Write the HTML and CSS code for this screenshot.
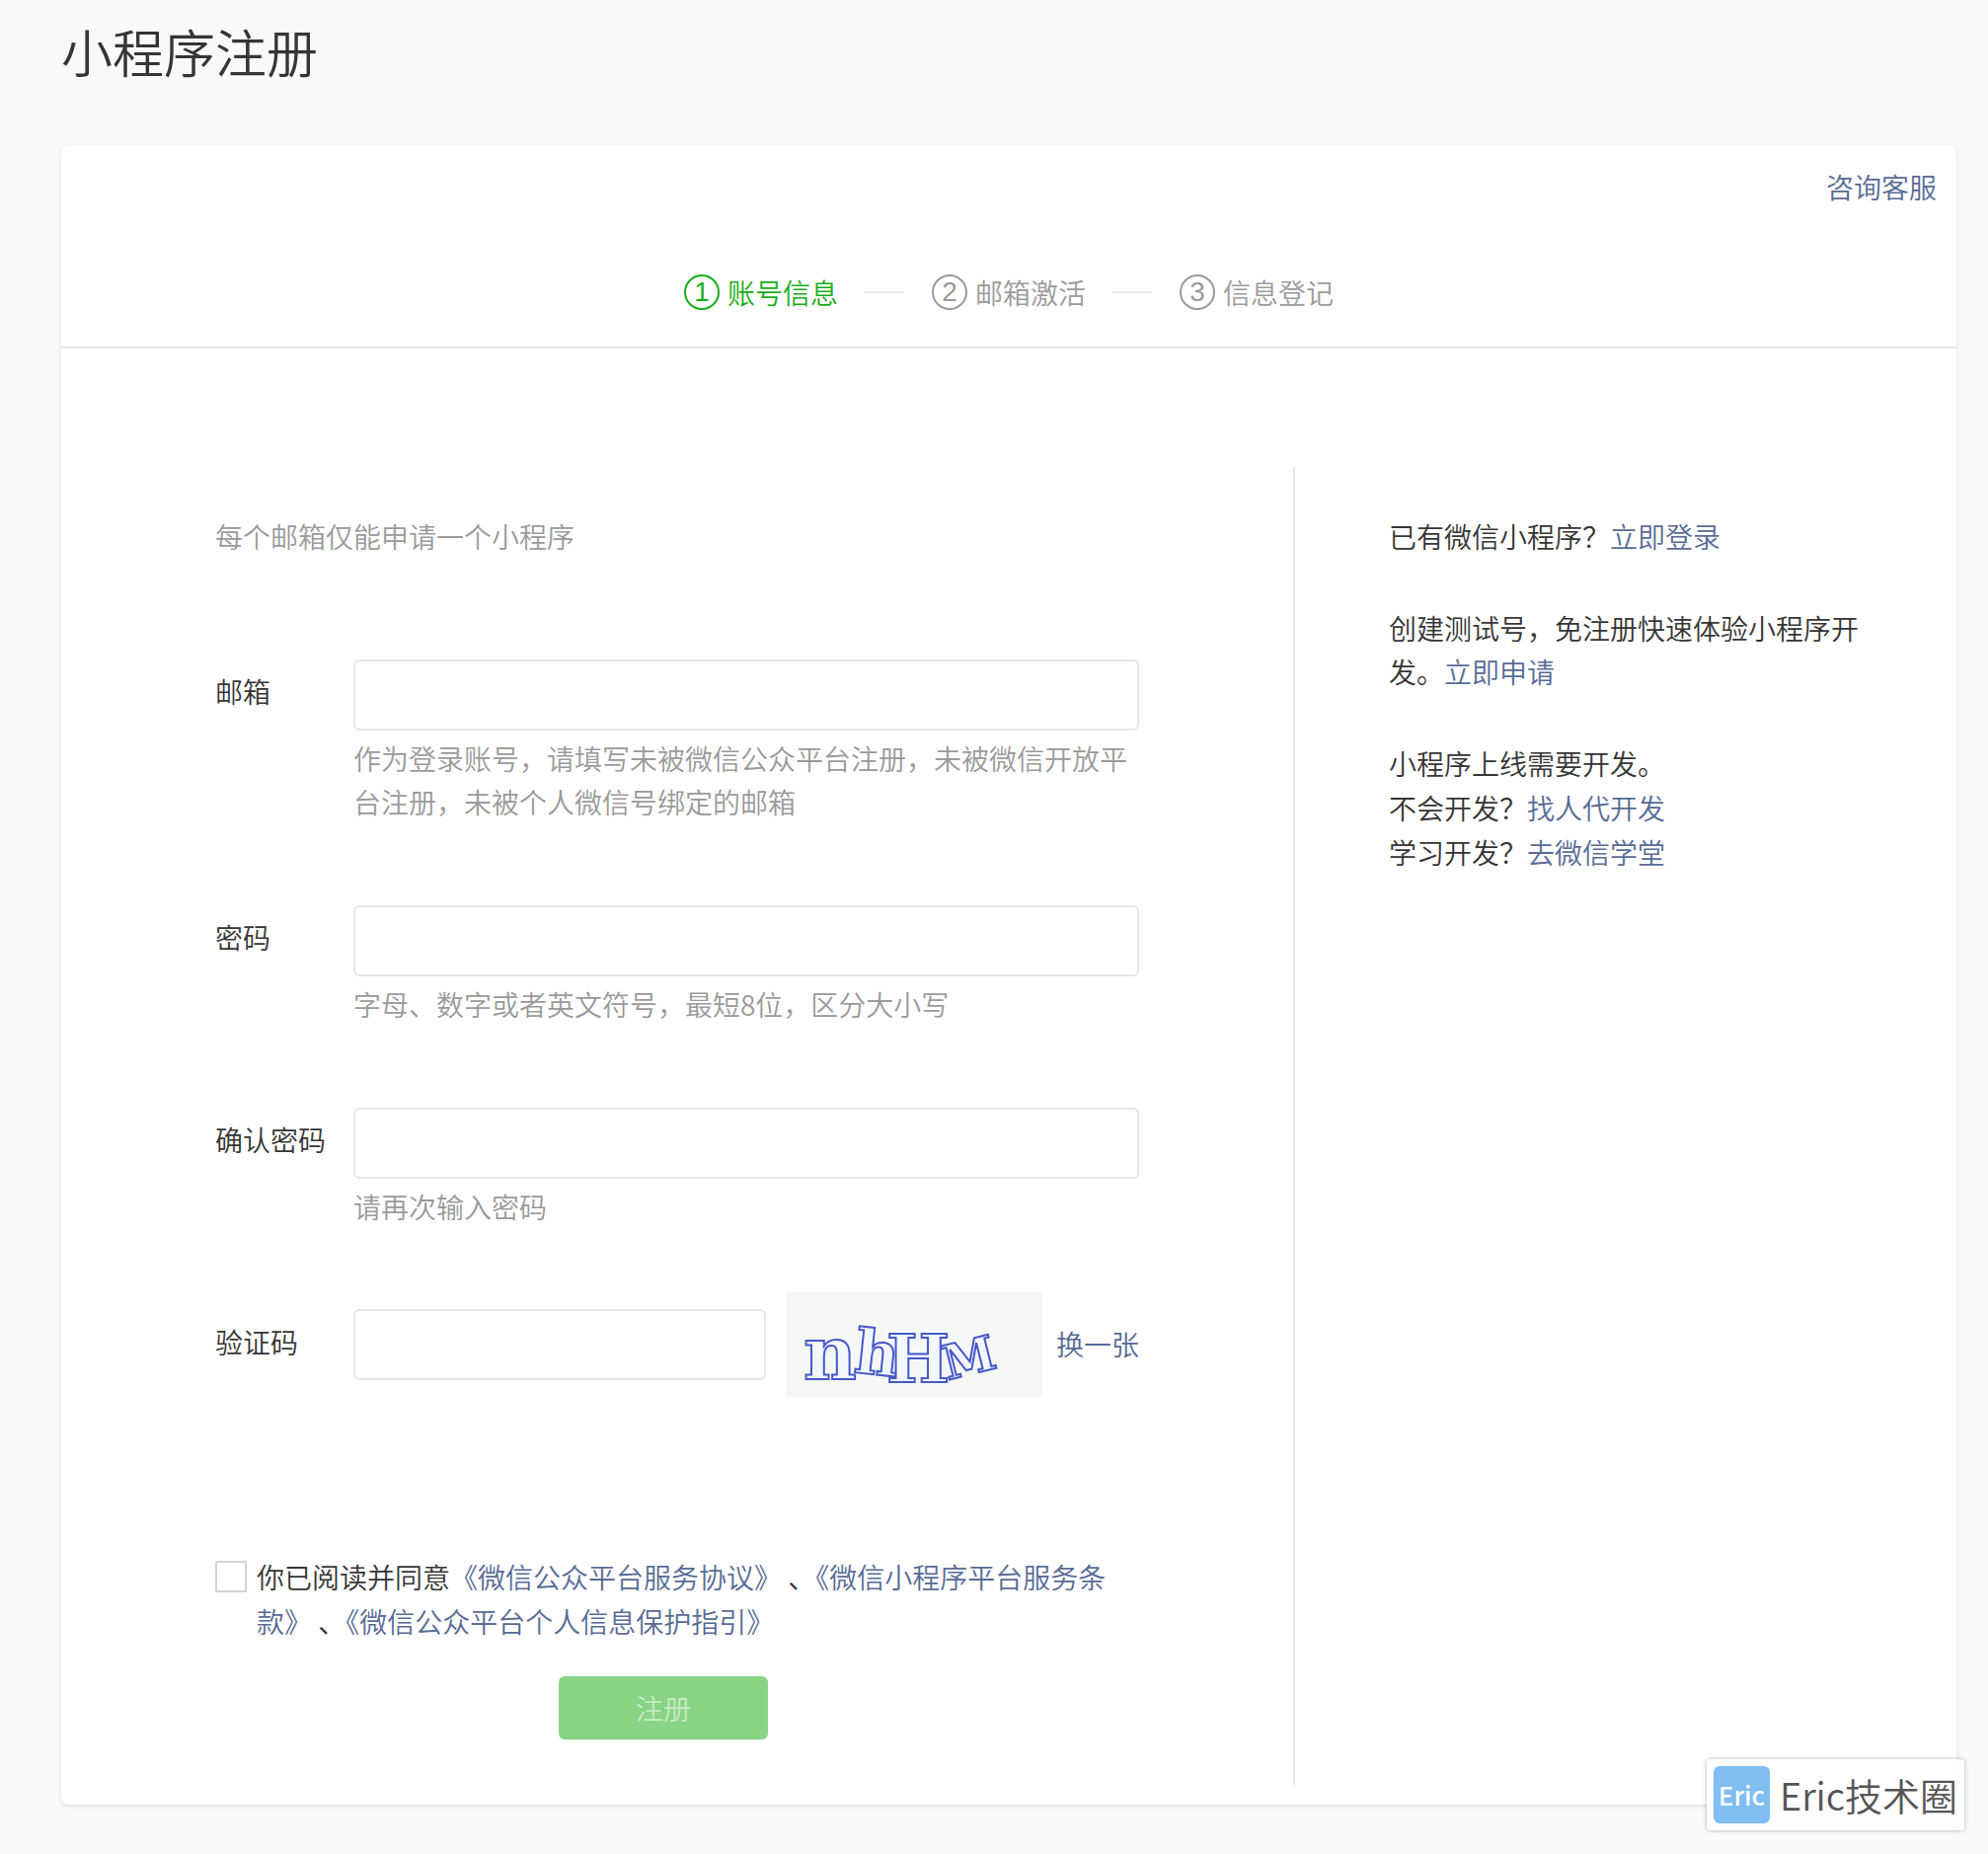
FILE: index.html
```html
<!DOCTYPE html>
<html lang="zh-CN">
<head>
    <meta charset="UTF-8">
    <meta name="viewport" content="width=device-width, initial-scale=1">
    <title>小程序注册</title>
    <link rel="stylesheet" href="styles.css">
</head>
<body>
    <h1 class="page-title">小程序注册</h1>

    <main class="card">
      <header class="card-header">
        <a class="service-link" href="#">咨询客服</a>
        <ol class="steps">
          <li class="step active"><span class="step-num">1</span>账号信息</li>
          <li class="step"><span class="step-num">2</span>邮箱激活</li>
          <li class="step"><span class="step-num">3</span>信息登记</li>
        </ol>
      </header>

      <div class="card-body">
        <form class="form">
          <p class="form-note">每个邮箱仅能申请一个小程序</p>

          <div class="field">
            <label for="email">邮箱</label>
            <div class="field-main">
              <input class="text-input" id="email" type="email">
              <p class="tips">作为登录账号，请填写未被微信公众平台注册，未被微信开放平台注册，未被个人微信号绑定的邮箱</p>
            </div>
          </div>
          <div class="field">
            <label for="password">密码</label>
            <div class="field-main">
              <input class="text-input" id="password" type="password">
              <p class="tips">字母、数字或者英文符号，最短8位，区分大小写</p>
            </div>
          </div>
          <div class="field">
            <label for="password2">确认密码</label>
            <div class="field-main">
              <input class="text-input" id="password2" type="password">
              <p class="tips">请再次输入密码</p>
            </div>
          </div>
          <div class="field field-captcha">
            <label for="captcha">验证码</label>
            <div class="field-main captcha">
              <input class="text-input" id="captcha" type="text">
              <svg class="captcha-img" viewBox="0 0 260 106">
                <rect width="260" height="106" fill="#f5f7f5"/>
                <g class="captcha-chars">
                  <text x="18" y="88" font-size="74">n</text>
                  <text x="68" y="81" font-size="62" transform="rotate(6 68 81)">h</text>
                  <text x="102" y="91" font-size="68">H</text>
                  <text x="164" y="89" font-size="48" transform="rotate(-14 164 89)">M</text>
                </g>
              </svg>
              <a class="captcha-change" href="#">换一张</a>
            </div>
          </div>

          <div class="form-footer">
            <div class="agreement">
              <input class="agree-box" id="agree" type="checkbox">
              <p><label for="agree">你已阅读并同意</label><a href="#">《微信公众平台服务协议》</a> 、<a href="#">《微信小程序平台服务条款》</a> 、<a href="#">《微信公众平台个人信息保护指引》</a></p>
            </div>
            <button class="submit" type="submit" disabled>注册</button>
          </div>
        </form>

        <aside class="side">
          <p>已有微信小程序？<a href="#">立即登录</a></p>
          <p>创建测试号，免注册快速体验小程序开发。<a href="#">立即申请</a></p>
          <p>小程序上线需要开发。<br>不会开发？<a href="#">找人代开发</a><br>学习开发？<a href="#">去微信学堂</a></p>
        </aside>
      </div>
    </main>

    <div class="watermark">
      <span class="watermark-logo">Eric</span>
      <span>Eric技术圈</span>
    </div>
</body>
</html>
```
FILE: styles.css
```css
:root {
  --color-text: #353535;
  --color-muted: #9a9a9a;
  --color-link: #576b95;
  --color-border: #e7e7eb;
  --color-green: #1aad19;
}

* {
  box-sizing: border-box;
}

body {
  position: relative;
  margin: 0;
  padding: 10px 32px 50px 62px;
  background: #f8f9fb;
  color: var(--color-text);
  font-family: "Noto Sans CJK SC", sans-serif;
  font-size: 28px;
  font-weight: 350;
  line-height: 1.6;
}

p {
  margin: 0;
}

a {
  color: var(--color-link);
  text-decoration: none;
}

.page-title {
  margin: 0 0 54px;
  font-size: 52px;
  font-weight: 350;
}

.card {
  background: #fff;
  border-radius: 8px;
  box-shadow: 0 2px 4px rgba(0, 0, 0, 0.1);
}

/* header and steps */
.card-header {
  display: flex;
  flex-direction: column;
  padding: 20px 20px 32px;
  border-bottom: 2px solid var(--color-border);
}

.service-link {
  align-self: flex-end;
}

.steps {
  display: flex;
  justify-content: center;
  margin: 62px 0 0;
  padding: 0;
  list-style: none;
}

.step {
  display: flex;
  align-items: center;
  color: var(--color-muted);
}

.step.active {
  color: var(--color-green);
}

.step + .step::before {
  content: "";
  width: 40px;
  margin: 0 28px 0 27px;
  border-top: 2px solid var(--color-border);
}

.step-num {
  width: 36px;
  height: 36px;
  margin-right: 8px;
  border: 2px solid;
  border-radius: 50%;
  font-family: "Liberation Sans", sans-serif;
  line-height: 32px;
  text-align: center;
}

/* form */
.card-body {
  display: flex;
  padding: 120px 84px 20px 156px;
}

.form {
  flex: 1;
  padding: 48px 156px 46px 0;
  border-right: 2px solid var(--color-border);
}

.form-note {
  margin-bottom: 102px;
  color: var(--color-muted);
}

.field {
  display: flex;
  margin-bottom: 82px;
}

.field > label {
  width: 140px;
  padding-top: 10px;
}

.field-main {
  flex: 1;
}

.text-input {
  display: block;
  width: 100%;
  height: 72px;
  padding: 0 20px;
  border: 2px solid var(--color-border);
  border-radius: 6px;
  background: #fff;
  color: inherit;
  font: inherit;
}

.tips {
  margin-top: 6px;
  color: var(--color-muted);
}

/* the captcha picture is taller than the input */
.field-captcha {
  align-items: center;
  margin: -18px 0 0;
}

.field-captcha > label {
  padding: 0 0 4px;
}

.captcha {
  display: flex;
  align-items: center;
}

.captcha .text-input {
  flex: 1;
  min-width: 0;
}

.captcha-img {
  width: 260px;
  height: 106px;
  margin: 0 14px 0 20px;
}

.captcha-chars {
  fill: #f3f6fd;
  stroke: #4458c8;
  stroke-width: 2;
  font-family: "DejaVu Serif", serif;
  font-weight: bold;
}

.form-footer {
  margin: 160px 28px 0 0;
}

.agreement {
  display: flex;
  align-items: flex-start;
}

.agree-box {
  flex: none;
  appearance: none;
  width: 32px;
  height: 32px;
  margin: 6px 10px 0 0;
  border: 2px solid #d3d3d3;
  border-radius: 2px;
  background: #fff;
}

.agree-box:checked {
  background: var(--color-green);
}

.submit {
  display: block;
  width: 212px;
  height: 64px;
  margin: 34px auto 0;
  padding: 0;
  border: 0;
  border-radius: 6px;
  background: #89d385;
  color: #c5eac3;
  font: inherit;
  line-height: 62px;
}

/* right column */
.side {
  width: 586px;
  padding: 48px 0 0 95px;
}

.side p + p {
  margin-top: 48px;
}

.watermark {
  position: absolute;
  right: 24px;
  bottom: 24px;
  display: flex;
  align-items: center;
  gap: 10px;
  height: 72px;
  padding: 0 7px;
  border-radius: 4px;
  background: rgba(255, 255, 255, 0.8);
  box-shadow: 0 0 4px rgba(0, 0, 0, 0.3);
  color: #555;
  font-size: 38px;
}

.watermark-logo {
  width: 57px;
  height: 58px;
  border-radius: 6px;
  background: #80bdf2;
  color: #fff;
  font-size: 26px;
  font-weight: 500;
  line-height: 58px;
  text-align: center;
}
```
